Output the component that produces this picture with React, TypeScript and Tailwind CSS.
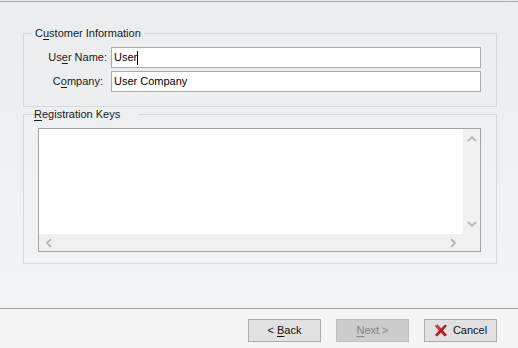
import { ReactNode } from 'react'

// Access-key underline (Windows style mnemonic)
function U({ children }: { children: ReactNode }) {
  return <span className="underline underline-offset-[2px] decoration-1">{children}</span>
}

function Chevron({ dir }: { dir: 'up' | 'down' | 'left' | 'right' }) {
  const pts = {
    up: '1,6 5,2 9,6',
    down: '1,2 5,6 9,2',
    left: '6,1 2,5 6,9',
    right: '2,1 6,5 2,9',
  }[dir]
  const horiz = dir === 'left' || dir === 'right'
  return (
    <svg
      width={horiz ? 8 : 10}
      height={horiz ? 10 : 8}
      viewBox={horiz ? '0 0 8 10' : '0 0 10 8'}
      fill="none"
      stroke="#b8b8b8"
      strokeWidth="1.8"
    >
      <polyline points={pts} />
    </svg>
  )
}

function CancelIcon() {
  return (
    <svg width="14" height="13" viewBox="0 0 14 13">
      <path d="M1 2 L3.5 0.5 L7 4.5 L11 0.5 L13 1.8 L9 6.5 L13 11 L10.5 12.5 L7 8.5 L3 12.5 L1 11 L5 6.5 Z" fill="#b81c1c" />
      <path d="M1 2 L3.5 0.5 L7 4.5 L5 6.5 Z" fill="#d84040" />
    </svg>
  )
}

function WinButton({
  children,
  disabled,
}: {
  children: ReactNode
  disabled?: boolean
}) {
  return (
    <button
      disabled={disabled}
      className={`w-[73px] h-[23px] flex items-center justify-center gap-[5px] border text-[11px] ${
        disabled
          ? 'bg-[#cccccc] border-[#bfbfbf] text-[#838383]'
          : 'bg-[#e1e1e1] border-[#adadad] text-[#111]'
      }`}
    >
      {children}
    </button>
  )
}

export default function App() {
  return (
    <div
      className="w-[518px] h-[348px] flex flex-col bg-gradient-to-b from-[#eaecee] to-[#f3f4f5] text-[11px] text-[#1a1a1a] overflow-hidden"
      style={{ fontFamily: '"Liberation Sans", Arial, sans-serif' }}
    >
      {/* top separator */}
      <div className="h-px mt-px bg-[#a8a8a8]" />

      <div className="flex flex-col pl-[23px] pr-[21px] pt-[25px]">
        {/* Customer Information */}
        <fieldset className="border border-[#d6d8db] pr-[15px] pb-[14px]">
          <legend className="ml-[8px] px-[3px] leading-[13px]">
            C<U>u</U>stomer Information
          </legend>
          <div className="flex flex-col gap-[3px] mt-[7px]">
            <div className="flex items-center">
              <label className="w-[87px] text-right pr-[4px] shrink-0">
                Us<U>e</U>r Name:
              </label>
              <div className="flex-1 h-[21px] bg-white border border-[#ababab] flex items-center pl-[2px] text-black">
                User
                <span className="w-px h-[14px] bg-black" />
              </div>
            </div>
            <div className="flex items-center">
              <label className="w-[87px] text-right pr-[8px] shrink-0">
                C<U>o</U>mpany:
              </label>
              <div className="flex-1 h-[21px] bg-white border border-[#ababab] flex items-center pl-[2px] text-black">
                User Company
              </div>
            </div>
          </div>
        </fieldset>

        {/* Registration Keys */}
        <fieldset className="mt-px border border-[#d6d8db] pl-[14px] pr-[15px] pb-[11px]">
          <legend className="ml-[8px] px-[3px] leading-[13px] -translate-x-[15px]">
            <U>R</U>egistration Keys
          </legend>
          <div className="mt-[7px] h-[124px] border border-[#a3a3a3] bg-white grid grid-cols-[1fr_17px] grid-rows-[1fr_17px]">
            <div />
            <div className="bg-[#f0f0f0] flex flex-col items-center justify-between py-[6px]">
              <Chevron dir="up" />
              <Chevron dir="down" />
            </div>
            <div className="bg-[#f0f0f0] flex items-center justify-between px-[6px]">
              <Chevron dir="left" />
              <Chevron dir="right" />
            </div>
            <div className="bg-[#f0f0f0]" />
          </div>
        </fieldset>
      </div>

      <div className="flex-1" />

      {/* bottom separator + buttons */}
      <div className="h-px bg-[#a0a0a0]" />
      <div className="h-[39px] bg-[#f4f4f4] flex justify-end items-start gap-[15px] pt-[10px] pr-[21px]">
        <WinButton>
          <span>
            &lt; <U>B</U>ack
          </span>
        </WinButton>
        <WinButton disabled>
          <span>
            <U>N</U>ext &gt;
          </span>
        </WinButton>
        <WinButton>
          <CancelIcon />
          <span>Cancel</span>
        </WinButton>
      </div>
    </div>
  )
}
